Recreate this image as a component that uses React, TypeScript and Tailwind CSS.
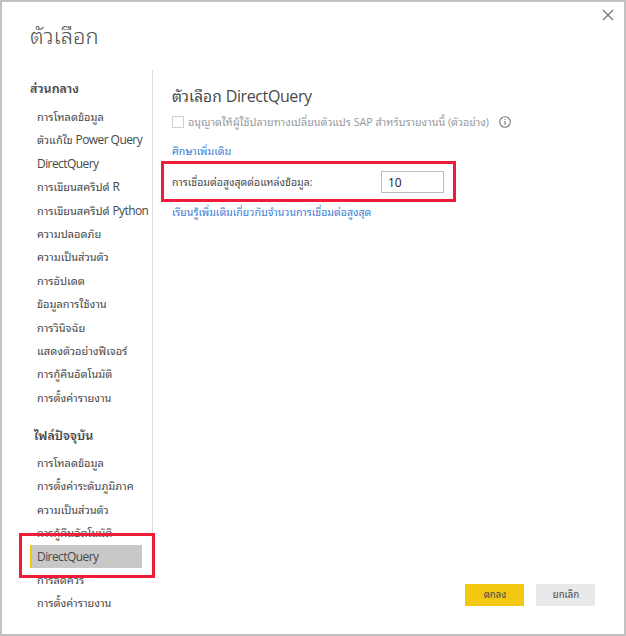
import React from "react";

const globalItems = [
  "การโหลดข้อมูล",
  "ตัวแก้ไข Power Query",
  "DirectQuery",
  "การเขียนสคริปต์ R",
  "การเขียนสคริปต์ Python",
  "ความปลอดภัย",
  "ความเป็นส่วนตัว",
  "การอัปเดต",
  "ข้อมูลการใช้งาน",
  "การวินิจฉัย",
  "แสดงตัวอย่างฟีเจอร์",
  "การกู้คืนอัตโนมัติ",
  "การตั้งค่ารายงาน",
];

const fileItems = [
  "การโหลดข้อมูล",
  "การตั้งค่าระดับภูมิภาค",
  "ความเป็นส่วนตัว",
  "การกู้คืนอัตโนมัติ",
  "DirectQuery",
  "การลดคิวรี",
  "การตั้งค่ารายงาน",
];

function Mixed({ text }: { text: string }) {
  return (
    <>
      {text.split(/([A-Za-z][A-Za-z ]*)/).map((part, i) =>
        /[A-Za-z]/.test(part) ? (
          <span key={i} className="text-[12px] tracking-[-0.57px]">
            {part}
          </span>
        ) : (
          part
        ),
      )}
    </>
  );
}

function Item({ label, active }: { label: string; active?: boolean }) {
  return (
    <li
      className={
        "h-[23.4px] w-[112px] whitespace-nowrap text-[11px] leading-[23.4px] " +
        (active ? "border-l-2 border-[#f2c811] bg-[#c8c8c8] pl-[5px]" : "pl-[7px]")
      }
    >
      <Mixed text={label} />
    </li>
  );
}

function NavGroup({ items, active }: { items: string[]; active?: string }) {
  return (
    <ul>
      {items.map((label) => (
        <Item key={label} label={label} active={label === active} />
      ))}
    </ul>
  );
}

export default function App() {
  return (
    <div className="relative flex h-[636px] w-[626px] flex-col overflow-hidden border-2 border-[#c2c2c2] bg-white font-['Open_Sans','Noto_Sans_Thai_Looped','Noto_Sans_Thai',sans-serif] text-[#484848]">
      <header className="flex h-[68px] justify-between">
        <h1 className="pl-7 pt-[17px] text-[22px] leading-[32px] font-light text-[#505050]">ตัวเลือก</h1>
        <svg className="mt-[7px] mr-[10px] size-3" viewBox="0 0 12 12" fill="none" stroke="#777" strokeWidth="1.3">
          <path d="M1 1l10 10M11 1L1 11" />
        </svg>
      </header>
      <div className="flex flex-1">
        <nav className="h-[464px] w-[151px] border-r border-[#dcdcdc] pl-7">
          <h2 className="mt-[9px] h-[26px] text-[12.5px] leading-[20px] font-semibold">ส่วนกลาง</h2>
          <NavGroup items={globalItems} />
          <h2 className="mt-[17px] h-[25px] pl-1 text-[12.5px] leading-[20px] font-semibold">ไฟล์ปัจจุบัน</h2>
          <NavGroup items={fileItems} active="DirectQuery" />
        </nav>
        <main className="flex flex-1 flex-col pl-[18px] text-[10.55px] whitespace-nowrap">
          <h2 className="mt-[14px] h-6 pl-px text-[15.5px] leading-6">
            ตัวเลือก <span className="text-[16px] tracking-[-0.4px]">DirectQuery</span>
          </h2>
          <label className="mt-[4px] flex h-5 items-center text-[10.75px] text-[#999]">
            <span className="ml-px mr-1 size-3 border border-[#d0d0d0]" />
            อนุญาตให้ผู้ใช้ปลายทางเปลี่ยนตัวแปร SAP สำหรับรายงานนี้ (ตัวอย่าง)
            <svg className="ml-[10px] size-3" viewBox="0 0 12 12" fill="none" stroke="#777" strokeWidth="1.1">
              <circle cx="6" cy="6" r="5.3" />
              <path d="M6 5v4M6 3v1" />
            </svg>
          </label>
          <a className="mt-[9px] h-5 pl-px leading-5 text-[#3b7dd8]">ศึกษาเพิ่มเติม</a>
          <div className="mt-[9px] flex h-[23px] items-center pl-px">
            <span className="w-[209px] pt-[3px]">การเชื่อมต่อสูงสุดต่อแหล่งข้อมูล:</span>
            <span className="h-[22px] w-[63px] border border-[#bdbdbd] pl-[6px] text-[12px] leading-[21px] text-[#222]">10</span>
          </div>
          <a className="mt-[9px] h-5 pl-px leading-5 text-[#3b7dd8]">เรียนรู้เพิ่มเติมเกี่ยวกับจำนวนการเชื่อมต่อสูงสุด</a>
          <div className="mt-auto mr-[29px] mb-7 flex justify-end gap-3 text-center text-[9.6px] leading-[22px]">
            <button className="h-[22px] w-[59px] bg-[#f2c811] pl-px">ตกลง</button>
            <button className="h-[22px] w-[59px] bg-[#e9e9e9] pl-px">ยกเลิก</button>
          </div>
        </main>
      </div>
      <div className="absolute top-[159px] left-[159px] h-[41px] w-[295px] border-3 border-[#ee1c38]" />
      <div className="absolute top-[531px] left-[17px] h-[45px] w-[136px] border-3 border-[#ee1c38]" />
    </div>
  );
}
